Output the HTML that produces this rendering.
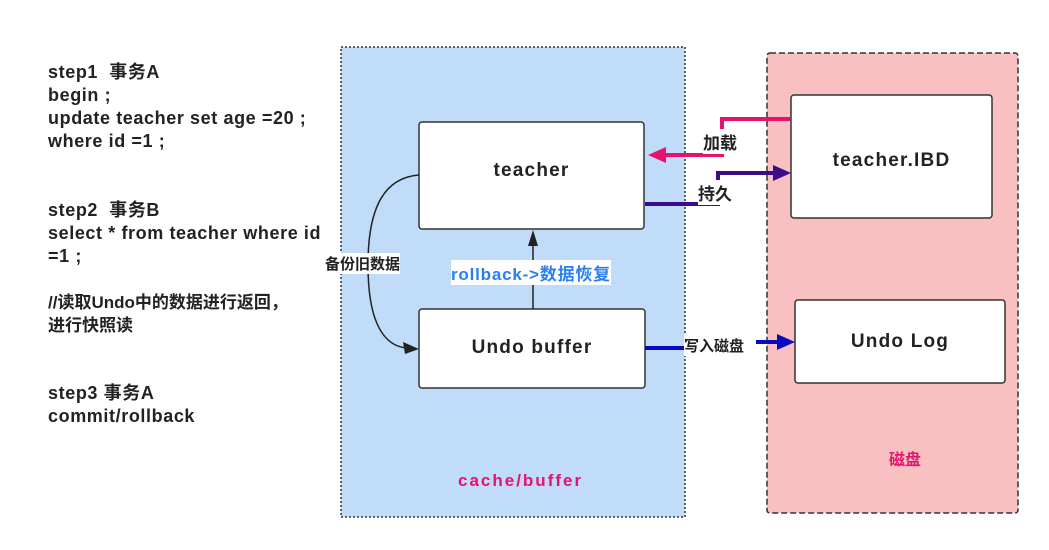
<!DOCTYPE html>
<html><head><meta charset="utf-8"><style>
body{margin:0;width:1049px;height:550px;background:#fff;position:relative;overflow:hidden;font-family:"Liberation Sans","Noto Sans CJK SC",sans-serif;font-weight:bold;color:#222}
.t{position:absolute;font-size:16px;white-space:nowrap}
.l{font-size:18px;letter-spacing:0.6px}
.b{letter-spacing:1.2px}
</style></head><body>
<svg width="1049" height="550" style="position:absolute;left:0;top:0">
<rect x="341" y="47" width="344" height="470" fill="#c0dcf9" stroke="#333" stroke-width="1.5" stroke-dasharray="2,2"/>
<rect x="767" y="53" width="251" height="460" rx="3" fill="#f8c0c0" stroke="#333" stroke-width="1.5" stroke-dasharray="6,3"/>
<rect x="419" y="122" width="225" height="107" rx="3" fill="#fff" stroke="#333" stroke-width="1.5"/>
<rect x="419" y="309" width="226" height="79" rx="3" fill="#fff" stroke="#333" stroke-width="1.5"/>
<rect x="791" y="95" width="201" height="123" rx="3" fill="#fff" stroke="#333" stroke-width="1.5"/>
<rect x="795" y="300" width="210" height="83" rx="3" fill="#fff" stroke="#333" stroke-width="1.5"/>
<polyline points="790,119 722,119 722,155 664,155" fill="none" stroke="#e8116e" stroke-width="4"/>
<polygon points="648,155 666,147 666,163" fill="#e8116e"/>
<polyline points="645,204 718,204 718,173 776,173" fill="none" stroke="#3c0b8a" stroke-width="4"/>
<polygon points="791,173 773,165 773,181" fill="#3c0b8a"/>
<line x1="645" y1="348" x2="686" y2="348" stroke="#0a0ac0" stroke-width="4"/>
<line x1="756" y1="342" x2="782" y2="342" stroke="#0a0ac0" stroke-width="4"/>
<polygon points="795,342 777,334 777,350" fill="#0a0ac0"/>
<line x1="533" y1="309" x2="533" y2="244" stroke="#222" stroke-width="1.5"/>
<polygon points="533,230 528,246 538,246" fill="#222"/>
<path d="M419,175 C380,178 368,215 368,265 C368,315 380,345 406,348" fill="none" stroke="#222" stroke-width="1.5"/>
<polygon points="419,349 403,342 405,354" fill="#222"/>
</svg>
<div class="t l" style="left:48px;top:61px;line-height:23px">step1&nbsp; 事务A<br>begin ;<br>update teacher set age =20 ;<br>where id =1 ;</div>
<div class="t l" style="left:48px;top:199px;line-height:23px">step2&nbsp; 事务B<br>select * from teacher where id<br>=1 ;</div>
<div class="t" style="left:48px;top:291px;line-height:23px;font-size:17px">//读取Undo中的数据进行返回，<br>进行快照读</div>
<div class="t l" style="left:48px;top:382px;line-height:23px">step3 事务A<br>commit/rollback</div>
<div class="t b" style="left:419px;top:160px;width:225px;text-align:center;font-size:19px">teacher</div>
<div class="t b" style="left:419px;top:337px;width:226px;text-align:center;font-size:19px">Undo buffer</div>
<div class="t b" style="left:791px;top:150px;width:201px;text-align:center;font-size:19px">teacher.IBD</div>
<div class="t b" style="left:795px;top:331px;width:210px;text-align:center;font-size:19px">Undo Log</div>
<div class="t" style="left:325px;top:253px;background:#fff;font-size:15px">备份旧数据</div>
<div class="t" style="left:451px;top:260px;background:#fff;color:#2a7ff0;font-size:17px;letter-spacing:0.8px">rollback-&gt;数据恢复</div>
<div class="t" style="left:703px;top:129px;font-size:17px;background:#fff">加载</div>
<div class="t" style="left:698px;top:180px;font-size:17px;background:#fff">持久</div>
<div class="t" style="left:684px;top:335px;background:#fff;font-size:15px">写入磁盘</div>
<div class="t" style="left:458px;top:471px;color:#e8116e;font-size:17px;letter-spacing:2px">cache/buffer</div>
<div class="t" style="left:889px;top:446px;color:#e8116e;font-size:16px">磁盘</div>
</body></html>
